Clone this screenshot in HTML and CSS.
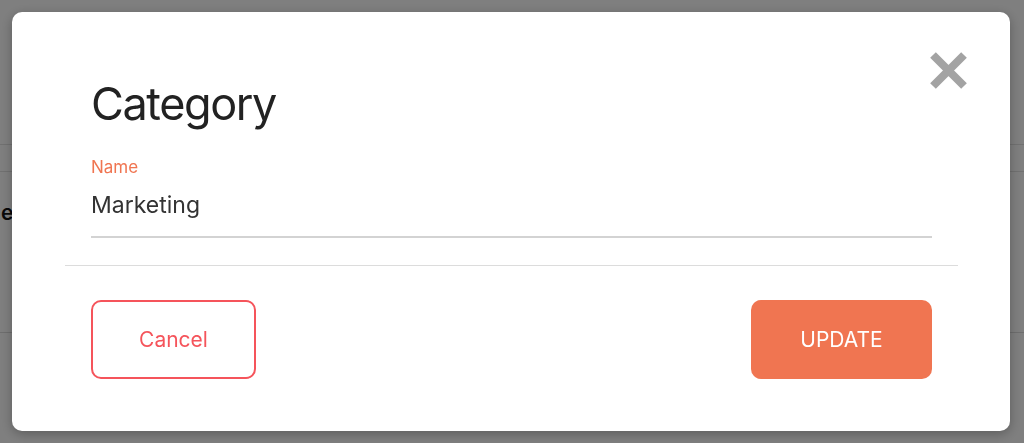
FILE: index.html
```html
<!DOCTYPE html>
<html lang="en">
<head>
<meta charset="utf-8">
<title>Category</title>
<link rel="stylesheet" href="styles.css">
</head>
<body>
  <div class="page">
    <div class="page-head"></div>
    <div class="page-sub"></div>
    <div class="page-row"><span class="page-label">Name:</span></div>
  </div>

  <div class="backdrop">
    <div class="modal">
      <button class="close" aria-label="Close">
        <svg width="37" height="37" viewBox="0 0 37 37"><path d="M3 3L34 34M34 3L3 34" stroke="#a3a3a3" stroke-width="8" fill="none"/></svg>
      </button>
      <div class="body">
        <h1 class="title">Category</h1>
        <label class="field-label">Name</label>
        <div class="field-input">Marketing</div>
      </div>
      <div class="divider"></div>
      <div class="actions">
        <button class="btn btn-cancel">Cancel</button>
        <button class="btn btn-update">UPDATE</button>
      </div>
    </div>
  </div>
</body>
</html>
```

FILE: styles.css
```css
* { box-sizing: border-box; }
html, body { margin: 0; padding: 0; }
body {
  width: 1024px;
  height: 443px;
  overflow: hidden;
  background: #fff;
  font-family: Inter, "Liberation Sans", sans-serif;
}

.page { width: 1024px; }
.page-head { height: 145px; border-bottom: 1px solid #e2e2e2; }
.page-sub { height: 27px; border-bottom: 1px solid #e2e2e2; }
.page-row {
  height: 161px;
  border-bottom: 1px solid #dcdcdc;
  padding-top: 28px;
  margin-left: -46px;
}
.page-label { font-size: 21px; font-weight: 600; color: #111; }

.backdrop {
  position: fixed;
  inset: 0;
  background: rgba(0, 0, 0, 0.5);
  display: flex;
  align-items: flex-start;
  padding: 12px 14px 12px 12px;
}

.modal {
  position: relative;
  width: 998px;
  height: 419px;
  background: #fff;
  border-radius: 10px;
  box-shadow: 0 3px 12px rgba(0, 0, 0, 0.28);
  padding: 65px 52px 52px 53px;
  display: flex;
  flex-direction: column;
}

.close {
  position: absolute;
  top: 40px;
  right: 43px;
  width: 37px;
  height: 37px;
  padding: 0;
  border: 0;
  background: none;
  display: block;
}
.close svg { display: block; }

.body {
  padding: 0 26px;
  display: flex;
  flex-direction: column;
}

.title {
  margin: 0;
  font-size: 45px;
  line-height: 54px;
  font-weight: 400;
  color: #222;
  letter-spacing: -1.4px;
}

.field-label {
  margin-top: 25px;
  font-size: 17px;
  line-height: 22px;
  color: #f07551;
}

.field-input {
  margin-top: 12px;
  font-size: 23px;
  line-height: 30px;
  color: #333;
  padding-bottom: 16px;
  border-bottom: 2px solid #d3d3d3;
}

.divider {
  margin-top: 27px;
  height: 1px;
  background: #dcdcdc;
}

.actions {
  margin-top: 34px;
  padding: 0 26px;
  display: flex;
  justify-content: space-between;
}

.btn {
  height: 79px;
  border-radius: 10px;
  font-family: inherit;
  font-size: 21px;
  cursor: pointer;
}
.btn-cancel {
  width: 165px;
  background: #fff;
  border: 2px solid #f5545b;
  color: #f5545b;
}
.btn-update {
  width: 181px;
  background: #f07551;
  border: 0;
  color: #fff;
}
```
